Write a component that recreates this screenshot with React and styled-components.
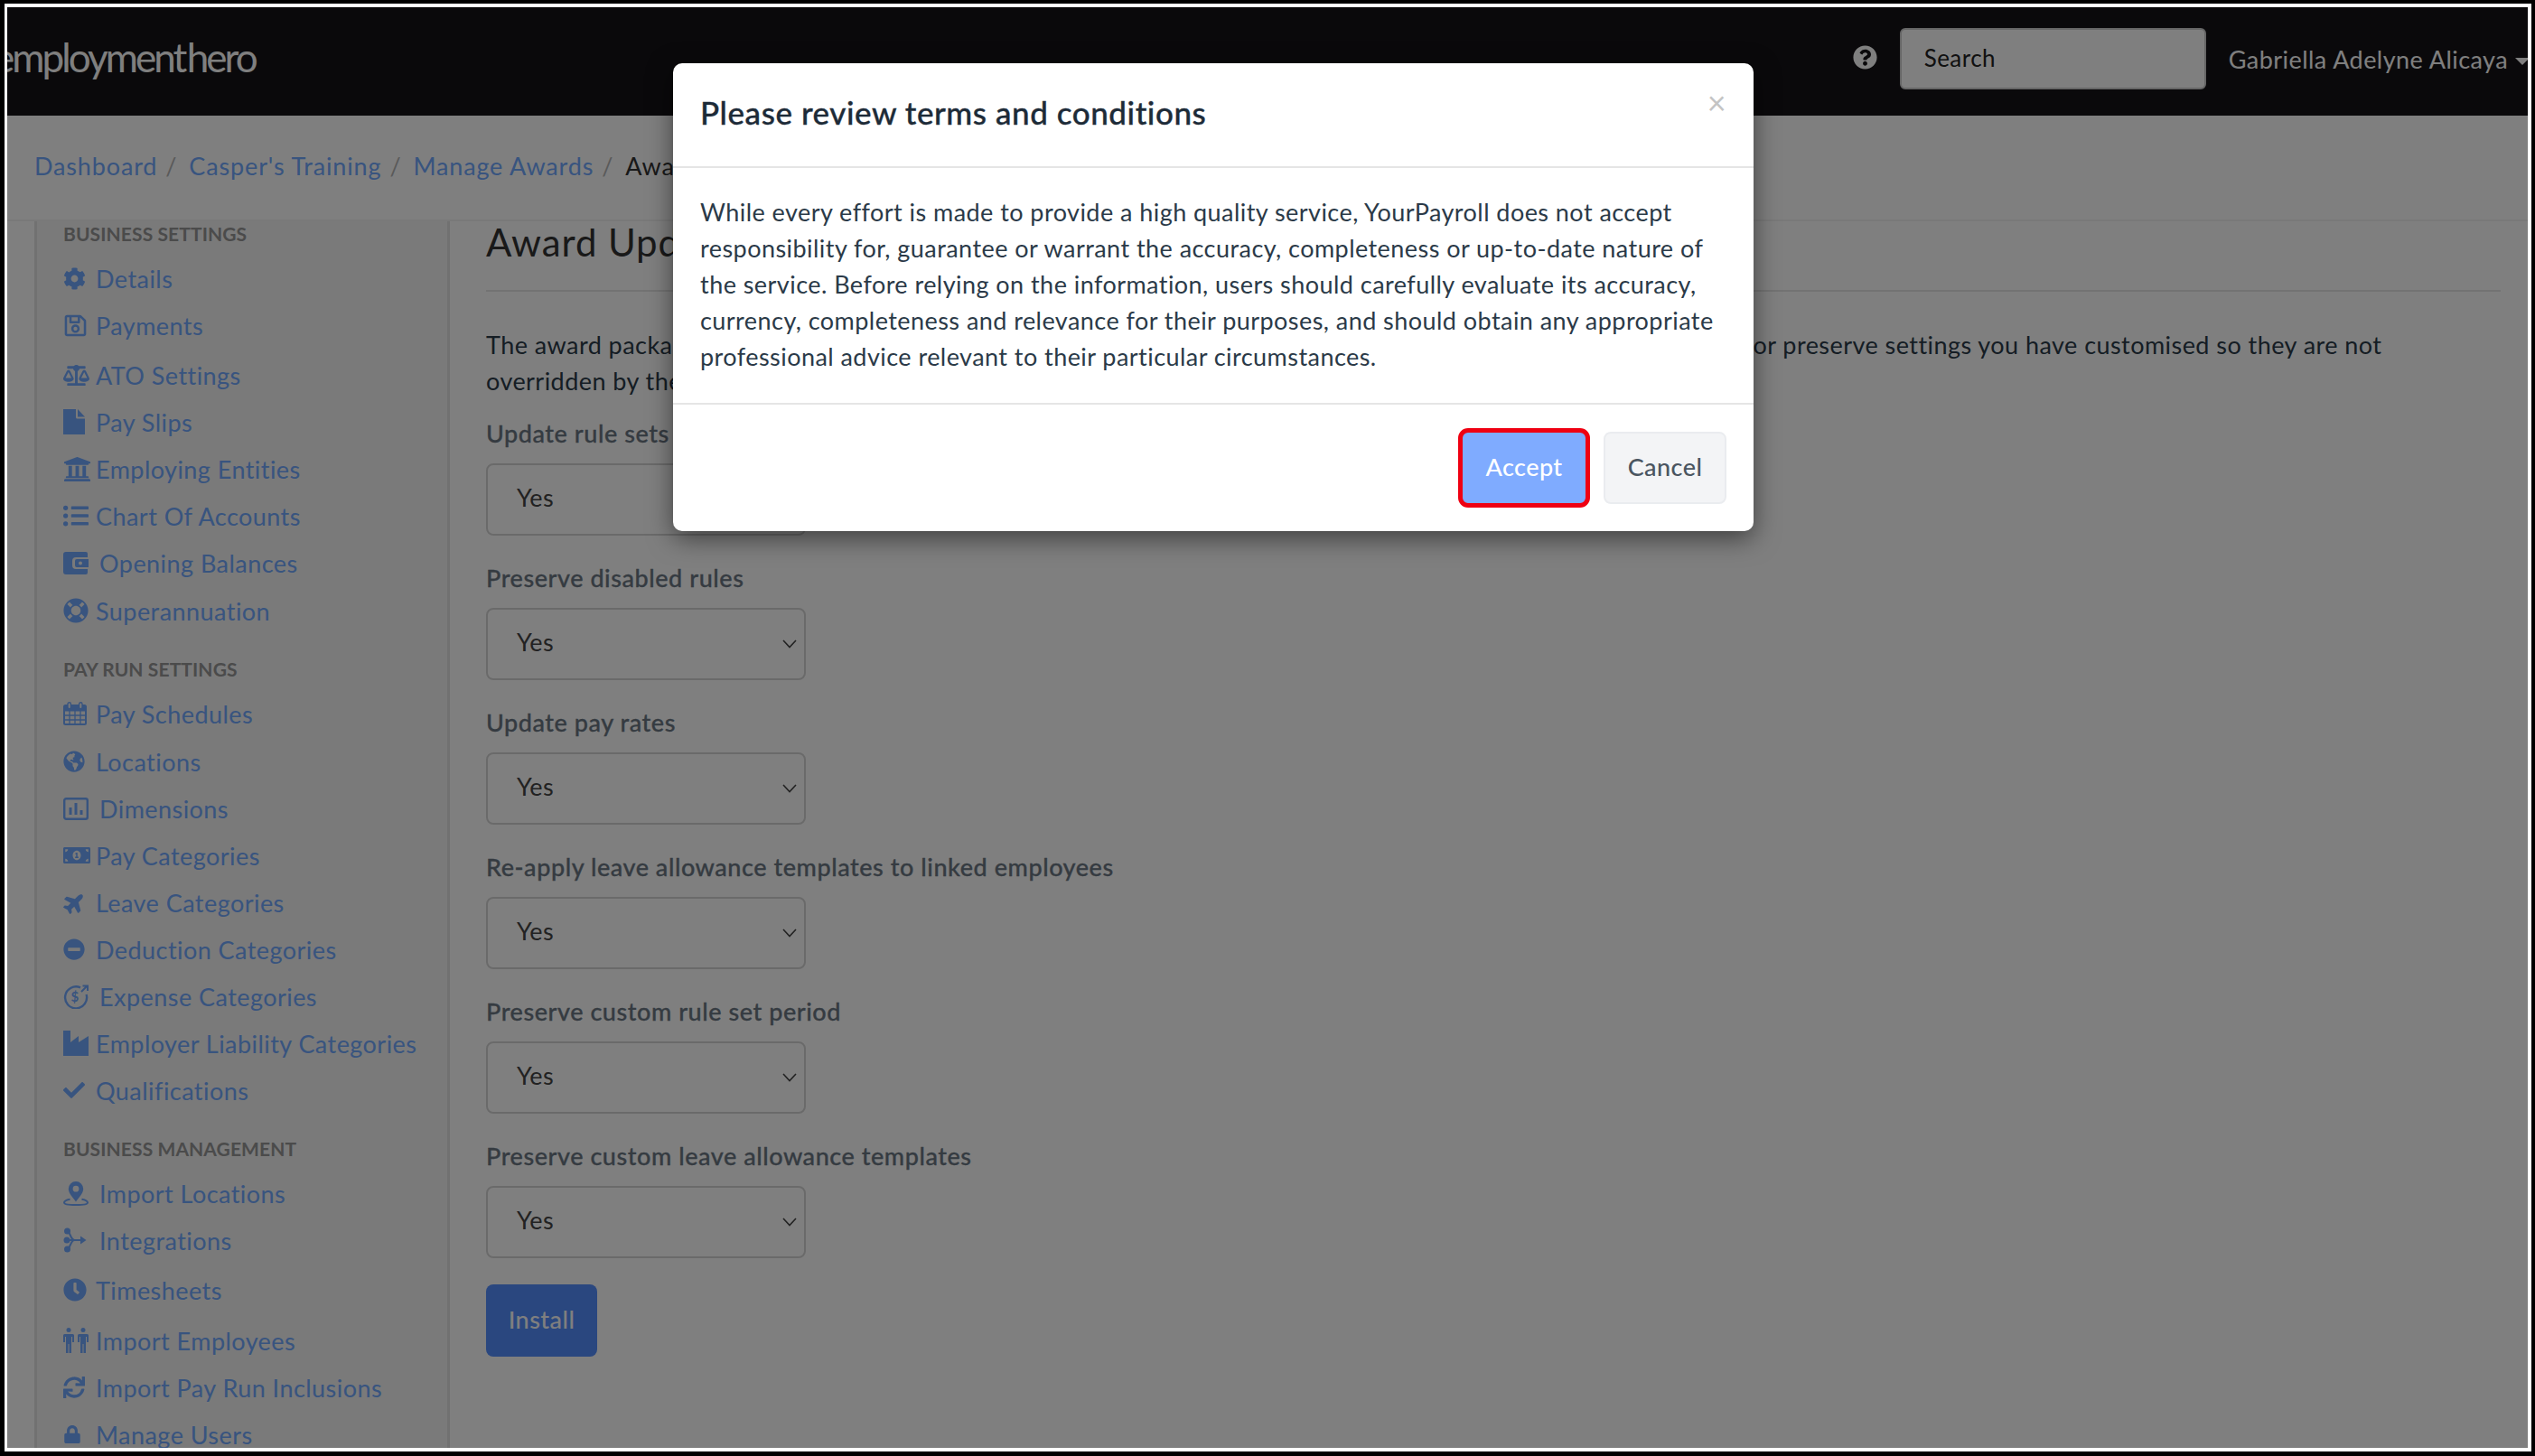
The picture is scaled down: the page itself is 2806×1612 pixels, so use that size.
import React from "react";
import styled, { createGlobalStyle } from "styled-components";
import {
  FaCog, FaRegSave, FaBalanceScale, FaUniversity, FaListUl, FaLifeRing,
  FaGlobeAmericas, FaMoneyBillAlt, FaPlane, FaMinusCircle,
  FaCheck, FaClock, FaSync, FaLock, FaQuestionCircle,
} from "react-icons/fa";

const GlobalStyle = createGlobalStyle`
  html, body { margin: 0; padding: 0; background: #000; }
  body { font-family: Lato, "Open Sans", sans-serif; letter-spacing: 0.45px; }
`;

const FileIcon = () => (
  <svg width="24" height="28" viewBox="0 0 24 28" fill="currentColor">
    <path d="M0 0h14v9a1.500 1.500 0 0 0 1.500 1.500H24V28H0z" />
    <path d="M16 0l8 8.500h-8z" />
  </svg>
);

const WalletIcon = () => (
  <svg width="28" height="25" viewBox="0 0 28 25" fill="currentColor">
    <path fillRule="evenodd" d="M3 0h22a2 2 0 0 1 2 2v4H14a4 4 0 0 0-4 4v5a4 4 0 0 0 4 4h13v4a2 2 0 0 1-2 2H3a3 3 0 0 1-3-3V3a3 3 0 0 1 3-3z" />
    <path fillRule="evenodd" d="M15 8h13v9H15a2 2 0 0 1-2-2v-5a2 2 0 0 1 2-2zm4 2.500a2 2 0 1 0 0 4 2 2 0 0 0 0-4z" />
  </svg>
);

const CalendarIcon = () => (
  <svg width="26" height="26" viewBox="0 0 26 26" fill="none" stroke="currentColor">
    <rect x="1" y="4" width="24" height="21" rx="1.500" strokeWidth="2" fill="none" />
    <path d="M1 5h24v5H1z" fill="currentColor" strokeWidth="1" />
    <path d="M7 10v15M13 10v15M19 10v15M1 15h24M1 20h24" strokeWidth="1.300" />
    <rect x="5" y="0.800" width="3.400" height="7" rx="1.700" fill="#f4f4f4" strokeWidth="1.400" />
    <rect x="17.600" y="0.800" width="3.400" height="7" rx="1.700" fill="#f4f4f4" strokeWidth="1.400" />
  </svg>
);

const BarsBoxIcon = () => (
  <svg width="28" height="25" viewBox="0 0 28 25" fill="currentColor">
    <rect x="1.200" y="1.200" width="25.600" height="22.600" rx="2" fill="none" stroke="currentColor" strokeWidth="2.400" />
    <rect x="6.500" y="11" width="3" height="8" />
    <rect x="12.500" y="6" width="3" height="13" />
    <rect x="18.500" y="14" width="3" height="5" />
  </svg>
);

const PlaneIcon = () => (
  <TiltedPlane>
    <FaPlane size={25} />
  </TiltedPlane>
);

const ExpenseIcon = () => (
  <svg width="28" height="27" viewBox="0 0 28 27" fill="none">
    <path d="M19 3.400A12 12 0 1 0 25.600 11" stroke="currentColor" strokeWidth="2.400" />
    <path d="M20 8l6-6M21.500 1.500H27V7" stroke="currentColor" strokeWidth="2" />
    <text x="8.500" y="19" fontSize="15" fontWeight="700" fill="currentColor" fontFamily="Lato, sans-serif">$</text>
  </svg>
);

const FactoryIcon = () => (
  <svg width="28" height="28" viewBox="0 0 28 28" fill="currentColor">
    <path d="M0 0h8v13l9-7v7l11-7v22H0z" />
  </svg>
);

const PinIcon = () => (
  <svg width="28" height="27" viewBox="0 0 28 27">
    <path fill="currentColor" fillRule="evenodd" d="M14 0a8.200 8.200 0 0 1 8.200 8.200c0 5-5 9.600-8.200 14.300C10.800 17.800 5.800 13.200 5.800 8.200A8.200 8.200 0 0 1 14 0zm0 4.800a3.400 3.400 0 1 0 0 6.800 3.400 3.400 0 0 0 0-6.800z" />
    <path fill="none" stroke="currentColor" strokeWidth="2" d="M7.500 19.800C3.500 20.600 1 22 1 23.500 1 25.400 6.800 26 14 26s13-.6 13-2.500c0-1.500-2.500-2.900-6.500-3.700" />
  </svg>
);

const IntegrationIcon = () => (
  <svg width="26" height="28" viewBox="0 0 26 28" fill="currentColor">
    <circle cx="4.500" cy="4" r="3.500" />
    <circle cx="4" cy="14" r="3.500" />
    <circle cx="4.500" cy="24" r="3.500" />
    <path d="M4.500 4c3 0 3.500 10 8 10M4.500 24c3 0 3.500-10 8-10M4 14h17" fill="none" stroke="currentColor" strokeWidth="2" />
    <path d="M19 9.500l6.500 4.500-6.500 4.500z" />
  </svg>
);

const PeopleIcon = () => (
  <svg width="28" height="28" viewBox="0 0 28 28" fill="currentColor">
    <circle cx="6" cy="2.500" r="2.500" />
    <circle cx="22" cy="2.500" r="2.500" />
    <path d="M1.500 7h9a1.500 1.500 0 0 1 1.500 1.500V16h-2v-6H9v18H6.500V18h-1v10H3V10H2v6H0V8.500A1.500 1.500 0 0 1 1.500 7z" />
    <path d="M17.500 7h9A1.500 1.500 0 0 1 28 8.500V16h-2v-6h-1v18h-2.500V18h-1v10H19V10h-1v6h-2V8.500A1.500 1.500 0 0 1 17.500 7z" />
  </svg>
);

const SelectChevron = () => (
  <svg width="16" height="10" viewBox="0 0 16 10" fill="none" stroke="currentColor" strokeWidth="1.600">
    <path d="M1 1l7 7.500L15 1" />
  </svg>
);

const groups = [
  {
    title: "BUSINESS SETTINGS",
    items: [
      { label: "Details", icon: <FaCog size={25} /> },
      { label: "Payments", icon: <FaRegSave size={27} /> },
      { label: "ATO Settings", icon: <FaBalanceScale size={29} />, extra: 3 },
      { label: "Pay Slips", icon: <FileIcon /> },
      { label: "Employing Entities", icon: <FaUniversity size={31} /> },
      { label: "Chart Of Accounts", icon: <FaListUl size={28} /> },
      { label: "Opening Balances", icon: <WalletIcon />, wide: true },
      { label: "Superannuation", icon: <FaLifeRing size={28} />, extra: 1 },
    ],
  },
  {
    title: "PAY RUN SETTINGS",
    items: [
      { label: "Pay Schedules", icon: <CalendarIcon /> },
      { label: "Locations", icon: <FaGlobeAmericas size={24} />, extra: 1 },
      { label: "Dimensions", icon: <BarsBoxIcon />, wide: true },
      { label: "Pay Categories", icon: <FaMoneyBillAlt size={30} /> },
      { label: "Leave Categories", icon: <PlaneIcon /> },
      { label: "Deduction Categories", icon: <FaMinusCircle size={24} /> },
      { label: "Expense Categories", icon: <ExpenseIcon />, wide: true },
      { label: "Employer Liability Categories", icon: <FactoryIcon /> },
      { label: "Qualifications", icon: <FaCheck size={24} /> },
    ],
  },
  {
    title: "BUSINESS MANAGEMENT",
    items: [
      { label: "Import Locations", icon: <PinIcon />, wide: true },
      { label: "Integrations", icon: <IntegrationIcon />, wide: true },
      { label: "Timesheets", icon: <FaClock size={26} />, extra: 3 },
      { label: "Import Employees", icon: <PeopleIcon />, extra: 4 },
      { label: "Import Pay Run Inclusions", icon: <FaSync size={24} /> },
      { label: "Manage Users", icon: <FaLock size={20} /> },
    ],
  },
];

const fields = [
  "Update rule sets",
  "Preserve disabled rules",
  "Update pay rates",
  "Re-apply leave allowance templates to linked employees",
  "Preserve custom rule set period",
  "Preserve custom leave allowance templates",
];

const App = () => {
  return (
    <>
      <GlobalStyle />
      <Frame>
        <Screen>
          <TopBar>
            <Logo>employment hero</Logo>
            <TopRight>
              <HelpIcon><FaQuestionCircle size={27} /></HelpIcon>
              <SearchBox>Search</SearchBox>
              <UserName>Gabriella Adelyne Alicaya</UserName>
              <Caret />
            </TopRight>
          </TopBar>

          <Breadcrumbs>
            <Crumb>Dashboard</Crumb>
            <Slash>/</Slash>
            <Crumb>Casper's Training</Crumb>
            <Slash>/</Slash>
            <Crumb>Manage Awards</Crumb>
            <Slash>/</Slash>
            <Current>Award Update</Current>
          </Breadcrumbs>

          <Body>
            <Sidebar>
              {groups.map((group) => (
                <Group key={group.title}>
                  <GroupTitle>{group.title}</GroupTitle>
                  {group.items.map((item) => (
                    <NavRow key={item.label} $extra={item.extra}>
                      <IconSlot $wide={item.wide}>{item.icon}</IconSlot>
                      {item.label}
                    </NavRow>
                  ))}
                </Group>
              ))}
            </Sidebar>

            <Content>
              <PageTitle>Award Update</PageTitle>
              <Intro>
                The award package contains new rule sets, pay rates and leave allowance. Choose whether to apply
                these changes or preserve settings you have customised so they are not
                <br />
                overridden by the update.
              </Intro>
              {fields.map((label) => (
                <Field key={label}>
                  <FieldLabel>{label}</FieldLabel>
                  <SelectBox>
                    Yes
                    <SelectChevron />
                  </SelectBox>
                </Field>
              ))}
              <InstallButton>Install</InstallButton>
            </Content>
          </Body>

          <Backdrop />

          <Modal>
            <ModalHeader>
              <ModalTitle>Please review terms and conditions</ModalTitle>
              <CloseMark>×</CloseMark>
            </ModalHeader>
            <ModalBody>
              While every effort is made to provide a high quality service, YourPayroll does not accept
              responsibility for, guarantee or warrant the accuracy, completeness or up-to-date nature of
              the service. Before relying on the information, users should carefully evaluate its accuracy,
              currency, completeness and relevance for their purposes, and should obtain any appropriate
              professional advice relevant to their particular circumstances.
            </ModalBody>
            <ModalFooter>
              <AcceptButton>Accept</AcceptButton>
              <CancelButton>Cancel</CancelButton>
            </ModalFooter>
          </Modal>
        </Screen>
      </Frame>
    </>
  );
};

export default App;

const LINK = "#70a8ff";

const Frame = styled.div`
  width: 2806px;
  height: 1612px;
  box-sizing: border-box;
  padding: 4px 4px 5px 5px;
  background: #000;
`;

const Screen = styled.div`
  position: relative;
  height: 100%;
  box-sizing: border-box;
  border: solid #fff;
  border-width: 4px 4px 4px 3px;
  background: #fff;
  overflow: hidden;
  display: flex;
  flex-direction: column;
`;

const TopBar = styled.header`
  flex: 0 0 120px;
  background: #141317;
  display: flex;
  align-items: center;
  justify-content: space-between;
`;

const Logo = styled.div`
  margin: -11px 0 0 -15px;
  font-size: 44px;
  font-weight: 400;
  letter-spacing: -2.95px;
  word-spacing: -6px;
  color: #fff;
`;

const TopRight = styled.div`
  display: flex;
  align-items: center;
  margin-right: -2px;
`;

const HelpIcon = styled.span`
  display: flex;
  color: #fff;
  margin: -10px 25px 0 0;
`;

const SearchBox = styled.div`
  width: 339px;
  height: 68px;
  box-sizing: border-box;
  margin-top: -6px;
  padding: 0 0 3px 25px;
  display: flex;
  align-items: center;
  background: #fff;
  border: 2px solid #ccc;
  border-radius: 6px;
  font-size: 26px;
  color: #222;
`;

const UserName = styled.span`
  margin: -5px 0 0 25px;
  font-size: 27px;
  color: #fff;
`;

const Caret = styled.span`
  margin-left: 8px;
  border: 8px solid transparent;
  border-top-color: #fff;
  border-bottom: 0;
`;

const Breadcrumbs = styled.nav`
  flex: 0 0 117px;
  box-sizing: border-box;
  display: flex;
  align-items: center;
  padding: 0 0 5px 30px;
  border-bottom: 2px solid #f2f2f2;
  font-size: 27px;
  letter-spacing: 0.85px;
`;

const Crumb = styled.a`
  color: ${LINK};
`;

const Slash = styled.span`
  margin: 0 13px 0 9px;
  color: #b5b5b5;
`;

const Current = styled.span`
  color: #333;
`;

const Body = styled.div`
  flex: 1;
  display: flex;
  min-height: 0;
`;

const Sidebar = styled.aside`
  flex: 0 0 460px;
  box-sizing: border-box;
  margin-left: 30px;
  padding-left: 29px;
  background: #f4f4f4;
  border: solid #e2e2e2;
  border-width: 0 3px;
`;

const Group = styled.div`
  margin-bottom: 24px;
`;

const GroupTitle = styled.h4`
  margin: 0 0 10px;
  height: 28px;
  line-height: 28px;
  font-size: 21px;
  font-weight: 700;
  letter-spacing: 0.1px;
  color: #969696;
`;

const NavRow = styled.a`
  display: flex;
  align-items: center;
  height: 52px;
  box-sizing: border-box;
  padding-bottom: 2px;
  margin-top: ${(p) => p.$extra || 0}px;
  font-size: 27px;
  color: ${LINK};
  white-space: nowrap;
`;

const IconSlot = styled.span`
  flex: 0 0 ${(p) => (p.$wide ? 40 : 36)}px;
  display: flex;
  align-items: center;
`;

const TiltedPlane = styled.span`
  display: flex;
  transform: rotate(-45deg);
`;

const Content = styled.main`
  flex: 1;
  padding: 0 30px 0 40px;
`;

const PageTitle = styled.h1`
  margin: 0 0 39px;
  padding-bottom: 30px;
  height: 46px;
  line-height: 46px;
  font-size: 42px;
  font-weight: 400;
  letter-spacing: 0.9px;
  color: #333;
  border-bottom: 2px solid #e6e6e6;
`;

const Intro = styled.p`
  margin: 0 0 20px;
  font-size: 27px;
  line-height: 40px;
  color: #2b3a48;
`;

const Field = styled.div`
  margin-bottom: 29px;
`;

const FieldLabel = styled.label`
  display: block;
  margin: -2px 0 13px;
  line-height: 40px;
  font-size: 27px;
  font-weight: 500;
  letter-spacing: 0.55px;
  -webkit-text-stroke: 0.3px currentColor;
  color: #6a7683;
`;

const SelectBox = styled.div`
  width: 354px;
  height: 80px;
  box-sizing: border-box;
  padding: 0 8px 5px 32px;
  display: flex;
  align-items: center;
  justify-content: space-between;
  border: 2px solid #d5d5d5;
  border-radius: 8px;
  font-size: 27px;
  color: #444;
  svg { margin-top: 5px; }
`;

const InstallButton = styled.button`
  width: 123px;
  height: 80px;
  padding-bottom: 5px;
  border: 0;
  border-radius: 8px;
  background: #548eff;
  color: #fff;
  font: 500 27px Lato, sans-serif;
  letter-spacing: 0.45px;
`;

const Backdrop = styled.div`
  position: absolute;
  inset: 0;
  background: rgba(0, 0, 0, 0.5);
`;

const Modal = styled.section`
  position: absolute;
  left: 737px;
  top: 62px;
  width: 1196px;
  height: 518px;
  display: flex;
  flex-direction: column;
  background: #fff;
  border-radius: 10px;
  box-shadow: 0 8px 28px rgba(0, 0, 0, 0.5);
`;

const ModalHeader = styled.div`
  flex: 0 0 116px;
  box-sizing: border-box;
  display: flex;
  justify-content: space-between;
  padding: 0 30px 0 30px;
  border-bottom: 2px solid #e5e5e5;
`;

const ModalTitle = styled.h2`
  margin: 32px 0 0;
  font-size: 35px;
  line-height: 44px;
  font-weight: 500;
  letter-spacing: 0.55px;
  -webkit-text-stroke: 0.35px currentColor;
  color: #1d2b38;
`;

const CloseMark = styled.span`
  margin-top: 21px;
  font-size: 36px;
  line-height: 44px;
  color: #c4c4c4;
`;

const ModalBody = styled.div`
  flex: 0 0 262px;
  box-sizing: border-box;
  padding: 29px 30px 0;
  font-size: 27px;
  line-height: 40px;
  color: #2b3a48;
  border-bottom: 2px solid #e5e5e5;
`;

const ModalFooter = styled.div`
  flex: 1;
  display: flex;
  justify-content: flex-end;
  align-items: center;
  gap: 15px;
  padding-right: 30px;
`;

const AcceptButton = styled.button`
  width: 146px;
  height: 88px;
  box-sizing: border-box;
  padding-bottom: 4px;
  border: 5px solid #ef0012;
  border-radius: 11px;
  background: #7fabff;
  color: #fff;
  font: 500 27px Lato, sans-serif;
  letter-spacing: 0.45px;
`;

const CancelButton = styled.button`
  width: 136px;
  height: 80px;
  box-sizing: border-box;
  padding-bottom: 4px;
  border: 2px solid #eaecef;
  border-radius: 8px;
  background: #f3f4f6;
  color: #4a5560;
  font: 500 27px Lato, sans-serif;
  letter-spacing: 0.45px;
`;
